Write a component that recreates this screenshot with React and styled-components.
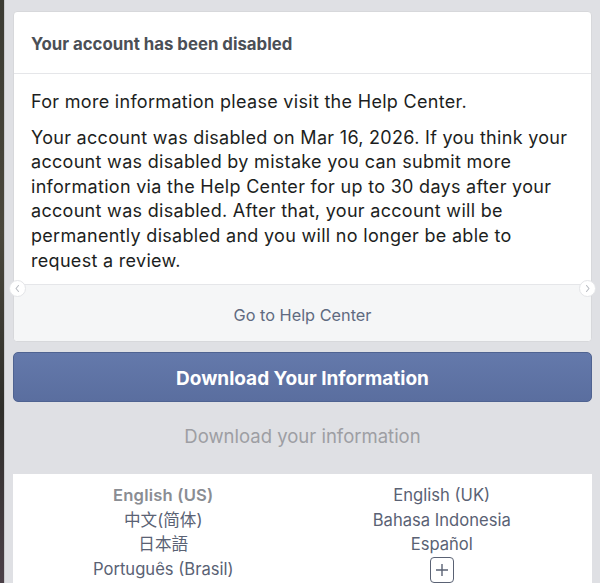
import React from "react";
import styled, { createGlobalStyle } from "styled-components";

const Global = createGlobalStyle`
  html, body { margin: 0; padding: 0; }
  body {
    background: #dfe0e4;
    font-family: Inter, "Noto Sans", Roboto, "Noto Sans CJK SC", sans-serif;
    -webkit-font-smoothing: antialiased;
  }
`;

const Screen = styled.div`
  display: flex;
  width: 600px;
  height: 583px;
  overflow: hidden;
  background: #dfe0e4;
`;

const Edge = styled.div`
  width: 4px;
  flex: none;
  background: linear-gradient(180deg, #3b3b33 0%, #4a473c 40%, #2f2e2a 70%, #4b4048 100%);
  border-right: 1px solid #c9cacd;
`;

const Page = styled.div`
  flex: 1;
  padding: 11px 8px 0 8px;
  display: flex;
  flex-direction: column;
`;

const Card = styled.div`
  position: relative;
  background: #fff;
  border-radius: 4px;
  border: 1px solid #d7d8db;
`;

const Header = styled.div`
  padding: 21px 17px 0;
  height: 40px;
  border-bottom: 1px solid #e5e6e9;
  font-size: 16.8px;
  font-weight: 700;
  color: #4b4f56;
  line-height: 22px;
`;

const Body = styled.div`
  padding: 16px 17px 11px;
  color: #1c1e21;
  font-size: 18px;
  letter-spacing: 0.3px;
  line-height: 24.6px;
`;

const Para = styled.p`
  margin: 0 0 11px;
  &:last-child { margin-bottom: 0; }
`;

const Footer = styled.div`
  height: 57px;
  border-top: 1px solid #e5e6e9;
  background: #f5f6f7;
  border-radius: 0 0 4px 4px;
  display: flex;
  align-items: center;
  justify-content: center;
  color: #606a80;
  font-size: 16.3px;
  padding-top: 4px;
  box-sizing: border-box;
`;

const Nudge = styled.div`
  position: absolute;
  top: 268px;
  ${(p) => (p.$side === "left" ? "left: -5px;" : "right: -5px;")}
  width: 15px;
  height: 15px;
  border-radius: 50%;
  background: #fff;
  border: 1px solid #e4e5e8;
  display: flex;
  align-items: center;
  justify-content: center;
`;

const PrimaryButton = styled.div`
  margin-top: 10px;
  height: 50px;
  border-radius: 5px;
  background: linear-gradient(180deg, #6479ab 0%, #5a6e9f 100%);
  border: 1px solid #4f6391;
  box-sizing: border-box;
  display: flex;
  align-items: center;
  justify-content: center;
  color: #fff;
  font-weight: 700;
  font-size: 19px;
  padding-top: 2px;
`;

const SubLink = styled.div`
  height: 72px;
  display: flex;
  align-items: center;
  justify-content: center;
  color: #9d9ea3;
  font-size: 18.5px;
  padding-bottom: 4px;
  box-sizing: border-box;
`;

const LangBox = styled.div`
  flex: 1;
  background: #fff;
  display: grid;
  grid-template-columns: 1fr 1fr;
  align-content: start;
  padding: 9px 11px 0;
  font-size: 16.6px;
  line-height: 24.5px;
`;

const LangCol = styled.div`
  display: flex;
  flex-direction: column;
  align-items: center;
`;

const Lang = styled.div`
  color: ${(p) => (p.$current ? "#8a8d93" : "#5a6274")};
  font-weight: ${(p) => (p.$current ? 600 : 400)};
  letter-spacing: ${(p) => (p.$current ? "0.2px" : "0")};
`;

const MoreBox = styled.div`
  width: 24px;
  height: 26px;
  border: 1.5px solid #5a6274;
  border-radius: 4px;
  display: flex;
  align-items: center;
  justify-content: center;
  box-sizing: border-box;
`;

const Chevron = ({ dir }) => (
  <svg width="7" height="9" viewBox="0 0 7 9">
    <path
      d={dir === "left" ? "M4.5 1.5 L2 4.5 L4.5 7.5" : "M2.5 1.5 L5 4.5 L2.5 7.5"}
      fill="none"
      stroke="#b8bbc1"
      strokeWidth="1.1"
      strokeLinecap="round"
      strokeLinejoin="round"
    />
  </svg>
);

export default function App() {
  return (
    <Screen>
      <Global />
      <Edge />
      <Page>
        <Card>
          <Header>Your account has been disabled</Header>
          <Body>
            <Para>For more information please visit the Help Center.</Para>
            <Para>
              Your account was disabled on Mar 16, 2026. If you think your
              account was disabled by mistake you can submit more information
              via the Help Center for up to 30 days after your account was
              disabled. After that, your account will be permanently disabled
              and you will no longer be able to request a review.
            </Para>
          </Body>
          <Footer>Go to Help Center</Footer>
          <Nudge $side="left"><Chevron dir="left" /></Nudge>
          <Nudge $side="right"><Chevron dir="right" /></Nudge>
        </Card>
        <PrimaryButton>Download Your Information</PrimaryButton>
        <SubLink>Download your information</SubLink>
        <LangBox>
          <LangCol>
            <Lang $current>English (US)</Lang>
            <Lang>中文(简体)</Lang>
            <Lang>日本語</Lang>
            <Lang>Português (Brasil)</Lang>
          </LangCol>
          <LangCol>
            <Lang>English (UK)</Lang>
            <Lang>Bahasa Indonesia</Lang>
            <Lang>Español</Lang>
            <MoreBox>
              <svg width="14" height="14" viewBox="0 0 14 14">
                <path d="M7 1 V13 M1 7 H13" stroke="#5a6274" strokeWidth="1.4" />
              </svg>
            </MoreBox>
          </LangCol>
        </LangBox>
      </Page>
    </Screen>
  );
}
